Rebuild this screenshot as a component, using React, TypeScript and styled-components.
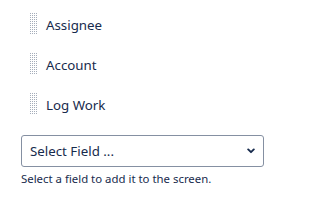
import React from 'react'
import styled, { createGlobalStyle } from 'styled-components'

const GlobalStyle = createGlobalStyle`
  html, body {
    margin: 0;
    padding: 0;
    background: #ffffff;
  }
  body {
    font-family: "Segoe UI", "Noto Sans", "Open Sans", sans-serif;
    color: #172b4d;
  }
`

const fields = ['Assignee', 'Account', 'Log Work']

export default function App() {
  return (
    <>
      <GlobalStyle />
      <Page>
        <List>
          {fields.map((f) => (
            <Row key={f}>
              <Handle />
              <Label>{f}</Label>
            </Row>
          ))}
        </List>
        <SelectBox>
          <SelectText>Select Field ...</SelectText>
          <Chevron viewBox="0 0 8 6">
            <path d="M1.2 1.4 L4 4.2 L6.8 1.4" fill="none" stroke="#172b4d" strokeWidth="1.9" strokeLinecap="round" strokeLinejoin="round" />
          </Chevron>
        </SelectBox>
        <Help>Select a field to add it to the screen.</Help>
      </Page>
    </>
  )
}

const Page = styled.div`
  width: 320px;
  height: 204px;
  padding: 13px 0 0 21px;
  box-sizing: border-box;
`

const List = styled.div`
  display: flex;
  flex-direction: column;
  gap: 18px;
  padding-left: 9px;
`

const Row = styled.div`
  display: flex;
  align-items: center;
  height: 22px;
  gap: 8px;
`

const Handle = styled.div`
  width: 8px;
  height: 22px;
  background-image: radial-gradient(circle at 0.5px 0.5px, #a5adba 0.6px, transparent 0.8px);
  background-size: 2px 2px;
`

const Label = styled.span`
  font-size: 13.3px;
  padding-top: 2px;
`

const SelectBox = styled.div`
  margin-top: 20px;
  width: 243px;
  height: 32px;
  box-sizing: border-box;
  border: 1px solid #8590a2;
  border-radius: 3px;
  display: flex;
  align-items: center;
  justify-content: space-between;
  padding: 0 8px 0 8px;
`

const SelectText = styled.span`
  font-size: 13.3px;
`

const Chevron = styled.svg`
  width: 8px;
  height: 6px;
`

const Help = styled.div`
  margin-top: 4px;
  font-size: 11.4px;
  line-height: 16px;
`
